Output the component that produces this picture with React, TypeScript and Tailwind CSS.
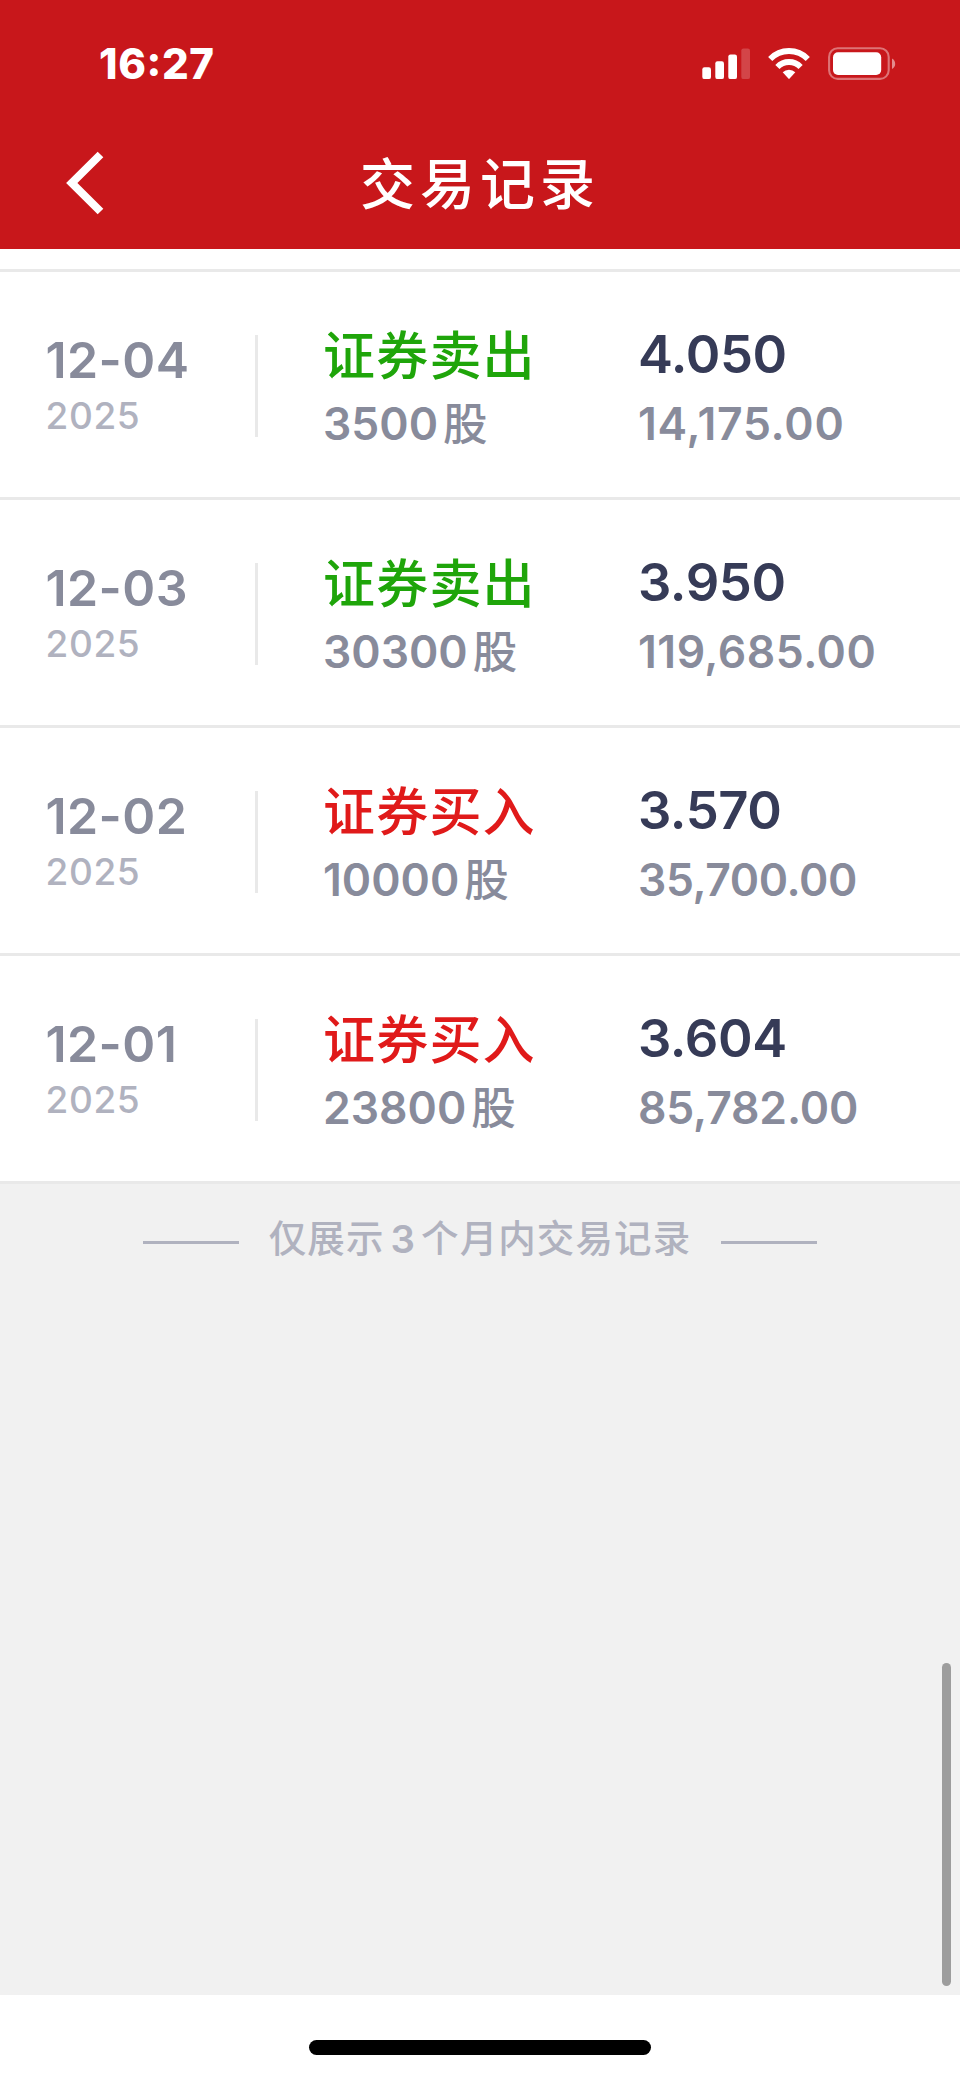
interface Trade {
  date: string
  year: string
  side: 'buy' | 'sell'
  shares: number
  price: string
  amount: string
  amountTracking: string
}

const trades: Trade[] = [
  { date: '12-04', year: '2025', side: 'sell', shares: 3500, price: '4.050', amount: '14,175.00', amountTracking: 'tracking-[0.75px]' },
  { date: '12-03', year: '2025', side: 'sell', shares: 30300, price: '3.950', amount: '119,685.00', amountTracking: 'tracking-[0.5px]' },
  { date: '12-02', year: '2025', side: 'buy', shares: 10000, price: '3.570', amount: '35,700.00', amountTracking: 'tracking-[-0.4px]' },
  { date: '12-01', year: '2025', side: 'buy', shares: 23800, price: '3.604', amount: '85,782.00', amountTracking: 'tracking-[-0.15px]' },
]

const sideLabels = {
  sell: '证券卖出',
  buy: '证券买入',
}

const sideColors = {
  sell: 'text-[#1fa50a]',
  buy: 'text-[#e01a1a]',
}

function StatusIcons() {
  return (
    <svg className="w-[194px] h-[34px]" viewBox="0 0 194 34" fill="#fff">
      <rect x="0.3" y="20.3" width="8.7" height="11.8" rx="2.2" />
      <rect x="13.3" y="14.2" width="8.7" height="17.9" rx="2.2" />
      <rect x="26.3" y="7.4" width="8.7" height="24.7" rx="2.2" />
      <rect x="39.3" y="1.4" width="8.7" height="30.7" rx="2.2" fillOpacity="0.2" />
      <g fill="none" stroke="#fff" strokeWidth="5.8">
        <path d="M68.2 12A26.1 26.1 0 0 1 105.8 12" />
        <path d="M75.4 20A16 16 0 0 1 98.6 20" />
      </g>
      <path d="M80.7 25.3A9 9 0 0 1 93.3 25.3L87.6 31.6Q87 32.2 86.4 31.6Z" />
      <rect x="127.1" y="1.3" width="59.6" height="30.6" rx="8.6" fill="none" stroke="#fff" strokeOpacity="0.4" strokeWidth="2.1" />
      <rect x="131" y="5.2" width="48.2" height="22.8" rx="5" />
      <path d="M190 11.4V22Q193.2 20.2 193.2 16.7Q193.2 13.2 190 11.4Z" fillOpacity="0.5" />
    </svg>
  )
}

function Header() {
  return (
    <header className="h-[249px] bg-[#c8171b] text-white">
      <div className="flex h-[118px] items-start justify-between pl-[99px] pr-[64px] pt-[47px]">
        <span className="text-[42px] font-extrabold leading-[34px] tracking-[0.6px]">
          16<span className="relative -top-[3px]">:</span>27
        </span>
        <StatusIcons />
      </div>
      <div className="flex h-[131px] items-start justify-between px-[64px] pt-[33px]">
        <button aria-label="返回">
          <svg className="h-[64px] w-[42px]" viewBox="0 0 42 64" fill="none" stroke="currentColor" strokeWidth="8">
            <path d="M36.5 3.5L7.8 32L36.5 60.5" />
          </svg>
        </button>
        <h1 className="pt-px text-[55px] font-medium leading-[64px] tracking-[5px]">交易记录</h1>
        <div className="w-[42px]" />
      </div>
    </header>
  )
}

function TradeRow({ trade }: { trade: Trade }) {
  return (
    <li className="flex h-[228px] border-b-[3px] border-[#e9e9e9] bg-white font-semibold">
      <div className="w-[255px] pl-[45.5px] pt-[58px] text-[#888b9b]">
        <div className="text-[50px] leading-[60px] tracking-[0.4px]">{trade.date}</div>
        <div className="text-[37px] font-medium leading-[51px] tracking-[0.6px] text-[#b0b2bf]">{trade.year}</div>
      </div>
      <div className="mt-[63px] h-[102px] w-[3px] bg-[#e9e9e9]" />
      <div className="w-[380px] pl-[65px] pt-[55px]">
        <div className={`text-[52px] font-medium leading-[60px] tracking-[1.2px] ${sideColors[trade.side]}`}>
          {sideLabels[trade.side]}
        </div>
        <div className="mt-[7px] flex gap-[5px] text-[44.5px] leading-[60px] text-[#888b9b]">
          <span>{trade.shares}</span>
          <span className="font-medium">股</span>
        </div>
      </div>
      <div className="pt-[52px]">
        <div className="text-[52.5px] leading-[60px] tracking-[-0.4px] text-[#363b57]">{trade.price}</div>
        <div className={`mt-[10px] text-[44.5px] leading-[60px] text-[#888b9b] ${trade.amountTracking}`}>{trade.amount}</div>
      </div>
    </li>
  )
}

export default function App() {
  return (
    <div className="relative flex h-[2079px] w-[960px] flex-col overflow-hidden bg-white font-['Inter','Noto_Sans_CJK_SC',sans-serif]">
      <Header />
      <main className="flex-1 bg-[#f1f1f1]">
        <ul>
          <li className="h-[23px] border-b-[3px] border-[#e9e9e9] bg-white" />
          {trades.map((trade) => (
            <TradeRow key={trade.date} trade={trade} />
          ))}
        </ul>
        <div className="flex items-center justify-center pt-[31px] text-[#b0b2bf]">
          <span className="mt-[7px] h-[3px] w-[96px] bg-[#b0b2bf]" />
          <span className="flex w-[482px] justify-center gap-[6px] text-[37.5px] font-medium leading-[48px] tracking-[1.1px]">
            <span>仅展示</span>
            <span className="text-[38.5px] font-semibold tracking-normal">3</span>
            <span>个月内交易记录</span>
          </span>
          <span className="mt-[7px] h-[3px] w-[96px] bg-[#b0b2bf]" />
        </div>
      </main>
      <footer className="flex h-[84px] justify-center bg-white pt-[45px]">
        <div className="h-[15px] w-[342px] rounded-full bg-black" />
      </footer>
      <div className="absolute right-[9px] top-[1663px] h-[323px] w-[9px] rounded-full bg-[#9d9d9d]" />
    </div>
  )
}
